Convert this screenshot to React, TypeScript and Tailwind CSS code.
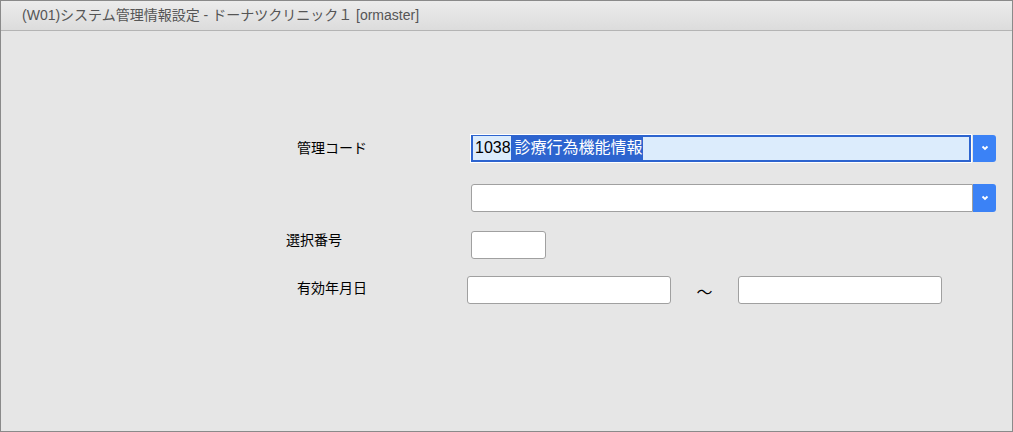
export default function App() {
  const font = { fontFamily: '"Liberation Sans", "Noto Sans CJK JP", sans-serif' };
  const chev = (
    <svg width="10" height="10" viewBox="0 0 10 10"><path d="M2.5 3.5 L5 6 L7.5 3.5" stroke="white" strokeWidth="1.8" fill="none" /></svg>
  );
  return (
    <div style={font} className="w-[1013px] h-[432px] border border-[#8a8a8a] bg-[#e6e6e6] flex flex-col text-[14px] text-black">
      <div className="h-[30px] shrink-0 bg-gradient-to-b from-[#ececec] to-[#dcdcdc] border-b border-[#b4b4b4] flex items-center pl-[21px] text-[14px] text-[#555]">
        (W01)システム管理情報設定 - ドーナツクリニック１ [ormaster]
      </div>
      <div className="flex flex-col pt-[103px]">
        <div className="flex items-center h-[28px]">
          <div className="w-[470px] pl-[296px]">管理コード</div>
          <div className="flex w-[525px] h-[27px]">
            <div className="flex-1 border-2 border-[#2d64cf] bg-[#dcecfc] flex items-center text-[16px] outline outline-1 outline-white">
              <span className="bg-[#dcecfc] pl-[2px]">1038</span>
              <span className="bg-[#2d64cf] text-white pl-[4px]">診療行為機能情報</span>
            </div>
            <div className="w-[23px] ml-[2px] bg-[#3b82f6] rounded-r-[3px] flex items-center justify-center">{chev}</div>
          </div>
        </div>
        <div className="flex items-center h-[28px] mt-[22px]">
          <div className="w-[470px]" />
          <div className="flex w-[525px] h-[28px]">
            <div className="flex-1 border border-[#a0a0a0] bg-white rounded-l-[3px]" />
            <div className="w-[23px] bg-[#3b82f6] rounded-r-[3px] flex items-center justify-center">{chev}</div>
          </div>
        </div>
        <div className="flex items-center h-[28px] mt-[19px]">
          <div className="w-[470px] pl-[285px] -mt-[10px]">選択番号</div>
          <div className="w-[75px] h-[28px] border border-[#a0a0a0] bg-white rounded-[3px]" />
        </div>
        <div className="flex items-center h-[28px] mt-[17px]">
          <div className="w-[466px] pl-[296px] -mt-[4px]">有効年月日</div>
          <div className="w-[204px] h-[28px] border border-[#a0a0a0] bg-white rounded-[3px]" />
          <div className="w-[67px] text-center text-[16px] mt-[6px]">～</div>
          <div className="w-[204px] h-[28px] border border-[#a0a0a0] bg-white rounded-[3px]" />
        </div>
      </div>
    </div>
  );
}
